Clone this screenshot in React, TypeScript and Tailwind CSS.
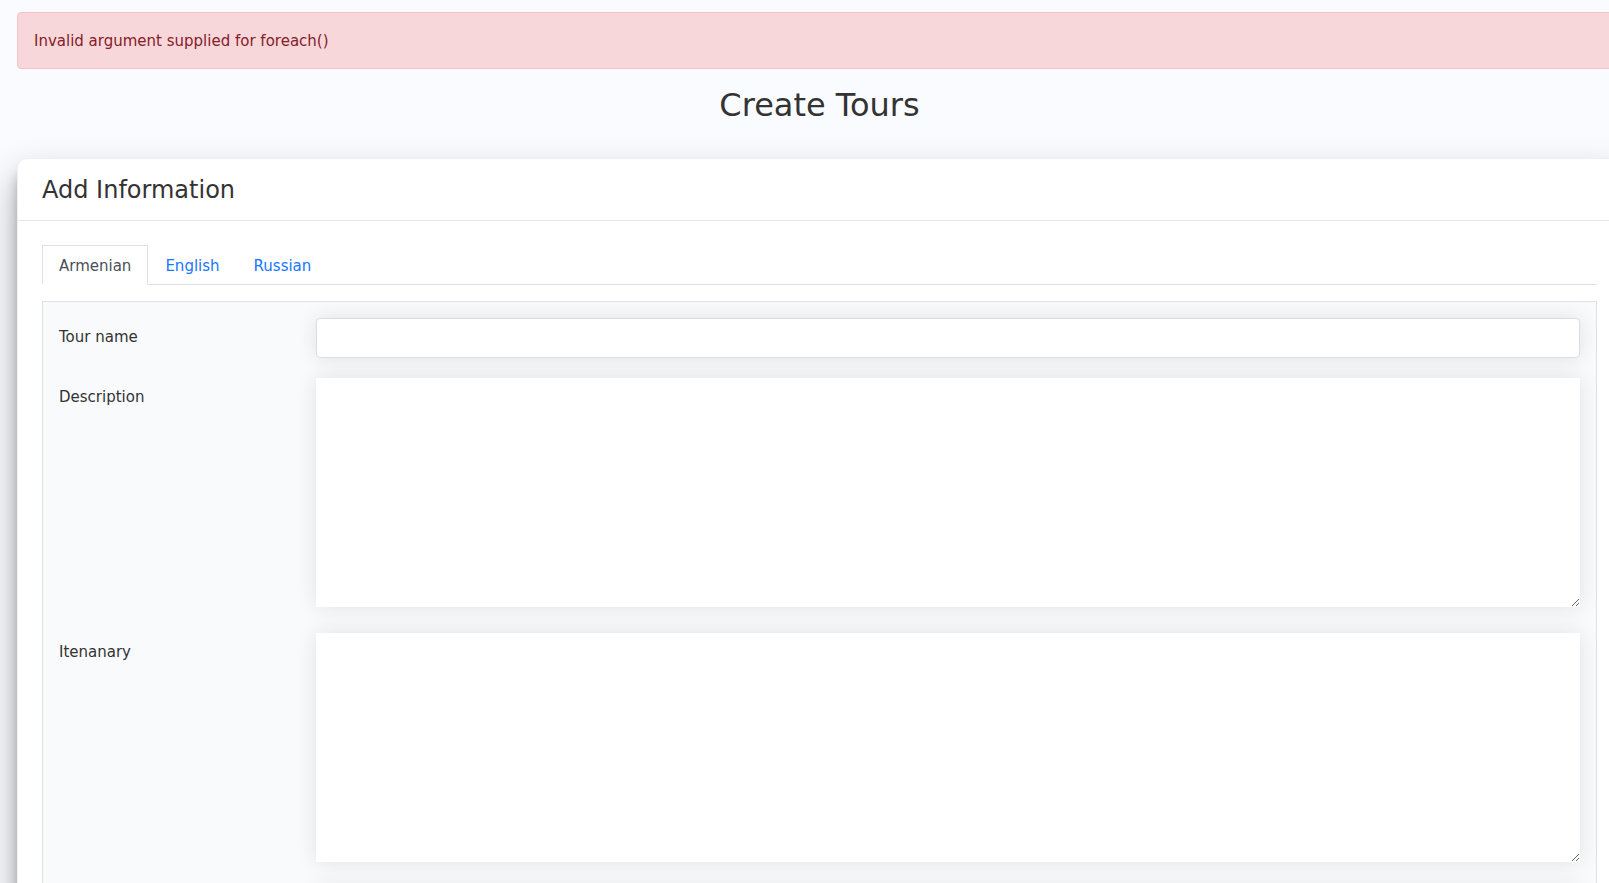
import { useState } from "react";
import type { ReactNode } from "react";

const languages = ["Armenian", "English", "Russian"];

const textareaClass =
  "block h-[229px] w-full resize-y bg-white px-3 py-2 shadow-[0_0_20px_rgba(0,0,0,0.1)] outline-none";

function Field({ id, label, children }: { id: string; label?: string; children: ReactNode }) {
  return (
    <div className="flex gap-[3px]">
      <div className="w-1/6 shrink-0 pt-2">
        {label && <label htmlFor={id}>{label}</label>}
      </div>
      <div className="min-w-0 flex-1">{children}</div>
    </div>
  );
}

export default function App() {
  const [active, setActive] = useState("Armenian");

  return (
    <div className="h-screen overflow-hidden bg-[#fafbff] font-['DejaVu_Sans',sans-serif] text-[15px] leading-[23px] text-[#333333]">
      <main className="-mr-[13px] ml-[17px] pt-3">
        <div
          role="alert"
          className="rounded border border-[#f5c2c7] bg-[#f8d7da] px-4 pt-[17px] pb-[15px] text-[#842029]"
        >
          Invalid argument supplied for foreach()
        </div>
        <h1 className="mt-4 text-center text-[32px] leading-10">Create Tours</h1>

        <section className="mt-[33px] rounded-[10px] border border-[#f1eefa] bg-white shadow-[0_19px_38px_rgba(0,0,0,0.3),0_15px_12px_rgba(0,0,0,0.22)]">
          <header className="border-b border-[#e7e7e9] px-6 pt-4 pb-[15px]">
            <h2 className="text-2xl leading-[30px]">Add Information</h2>
          </header>

          <div className="px-6 pt-6">
            <div role="tablist" className="flex border-b border-[#dee2e6]">
              {languages.map((name) => (
                <button
                  key={name}
                  type="button"
                  role="tab"
                  aria-selected={active === name}
                  onClick={() => setActive(name)}
                  className={
                    active === name
                      ? "-mb-px border border-[#dee2e6] border-b-white bg-white px-4 pt-[9px] pb-[6px] text-[#495057]"
                      : "-mb-px border border-transparent px-4 pt-[9px] pb-[6px] text-[#1677ff]"
                  }
                >
                  {name}
                </button>
              ))}
            </div>

            <form className="mt-4 border border-[#dee2e6] bg-[#f8fafc] px-4 pt-4">
              <div className="mb-5">
                <Field id="tour-name" label="Tour name">
                  <input
                    id="tour-name"
                    type="text"
                    className="block h-10 w-full rounded border border-[#dddddd] bg-white px-3 shadow-[0_0_20px_rgba(0,0,0,0.1)] outline-none"
                  />
                </Field>
              </div>
              <div className="flex flex-col gap-[26px] pb-6">
                <Field id="description" label="Description">
                  <textarea id="description" className={textareaClass} />
                </Field>
                <Field id="itenanary" label="Itenanary">
                  <textarea id="itenanary" className={textareaClass} />
                </Field>
                <Field id="notes">
                  <textarea id="notes" aria-label="Notes" className={textareaClass} />
                </Field>
              </div>
            </form>
          </div>
        </section>
      </main>
    </div>
  );
}
